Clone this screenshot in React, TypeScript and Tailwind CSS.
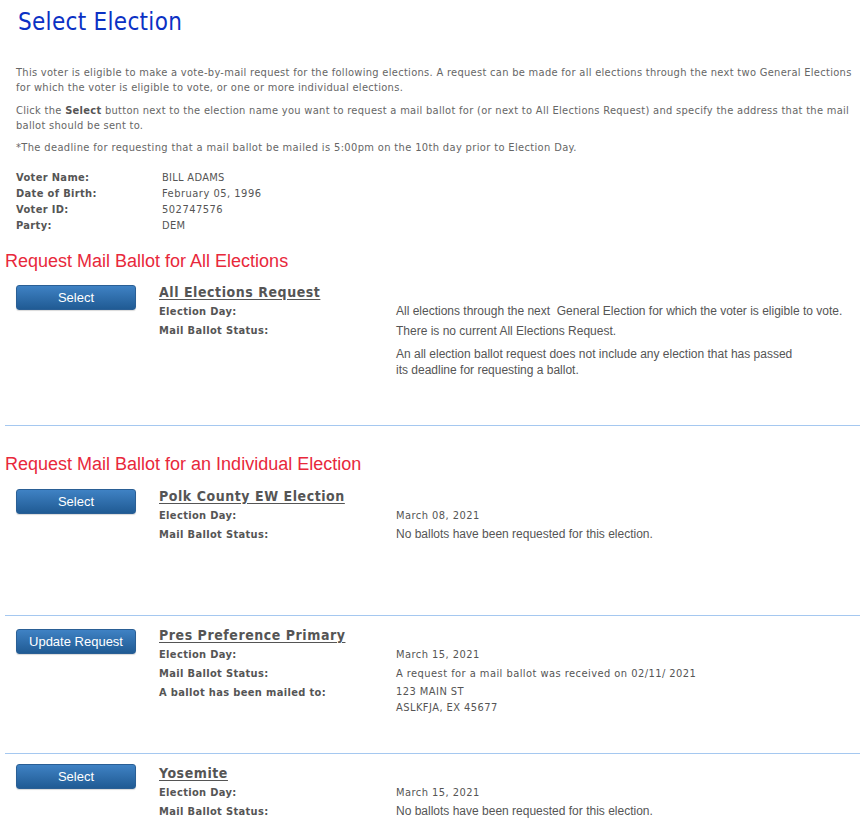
import React from 'react';

const tahoma = "font-['DejaVu_Sans_Condensed','DejaVu_Sans',sans-serif] [font-stretch:condensed]";
const arial = "font-['Liberation_Sans',Arial,sans-serif]";

type Row = { label: string; value: React.ReactNode; arialValue?: boolean };

function BlueButton({ children }: { children: React.ReactNode }) {
  return (
    <button
      className={`${arial} w-[120px] h-[25px] rounded-[3px] border border-[#2a5f95] bg-gradient-to-b from-[#3f82c4] to-[#205b94] text-[13px] text-white shadow-[0_1px_1px_rgba(0,0,0,0.15)]`}
    >
      {children}
    </button>
  );
}

function ElectionBlock({
  button,
  title,
  rows,
  className,
  btnOffset = 'pt-[2px]',
  detailOffset = '',
}: {
  button: string;
  title: string;
  rows: Row[];
  className: string;
  btnOffset?: string;
  detailOffset?: string;
}) {
  return (
    <div className={`flex ${className}`}>
      <div className={`w-[159px] pl-4 shrink-0 ${btnOffset}`}>
        <BlueButton>{button}</BlueButton>
      </div>
      <div className={`flex-1 ${detailOffset}`}>
        <div
          className={`${tahoma} text-[14px] leading-[19px] font-bold tracking-[0.55px] text-[#555] underline underline-offset-2`}
        >
          {title}
        </div>
        {rows.map((r, i) => (
          <div key={i} className="grid grid-cols-[237px_1fr]">
            <div className={`${tahoma} text-[11px] leading-[19px] font-bold tracking-[0.35px] text-[#555]`}>
              {r.label}
            </div>
            <div
              className={
                r.arialValue
                  ? `${arial} text-[12px] leading-[19px] text-[#555]`
                  : `${tahoma} text-[11px] leading-[19px] tracking-[0.45px] text-[#555]`
              }
            >
              {r.value}
            </div>
          </div>
        ))}
      </div>
    </div>
  );
}

export default function App() {
  return (
    <div className="bg-white w-[864px] min-h-[838px] pb-6">
      <h1 className={`${tahoma} text-[24px] leading-[29px] text-[#0b31c4] pl-[18px] pt-[8px] tracking-[0.3px]`}>
        Select Election
      </h1>

      <div className={`${tahoma} text-[11px] leading-[15px] tracking-[0.3px] text-[#666] pl-4 pr-[4px] mt-[28px]`}>
        <p>
          This voter is eligible to make a vote-by-mail request for the following elections. A request can be made for
          all elections through the next two General Elections for which the voter is eligible to vote, or one or more
          individual elections.
        </p>
        <p className="mt-2">
          Click the <b className="text-[#555]">Select</b> button next to the election name you want to request a mail
          ballot for (or next to All Elections Request) and specify the address that the mail ballot should be sent to.
        </p>
        <p className="mt-[7px] tracking-[0.36px]">
          *The deadline for requesting that a mail ballot be mailed is 5:00pm on the 10th day prior to Election Day.
        </p>

        <div className="mt-[15px] grid grid-cols-[146px_1fr] leading-[16px] text-[#555]">
          <span className="font-bold tracking-[0.35px]">Voter Name:</span>
          <span>BILL ADAMS</span>
          <span className="font-bold tracking-[0.35px]">Date of Birth:</span>
          <span className="tracking-[0.5px]">February 05, 1996</span>
          <span className="font-bold tracking-[0.35px]">Voter ID:</span>
          <span className="tracking-[0.5px]">502747576</span>
          <span className="font-bold tracking-[0.35px]">Party:</span>
          <span>DEM</span>
        </div>
      </div>

      <h2 className={`${arial} text-[18px] leading-[22px] text-[#e8283b] pl-[5px] mt-[16px]`}>
        Request Mail Ballot for All Elections
      </h2>
      <ElectionBlock
        className="pt-[11px] h-[153px]"
        button="Select"
        title="All Elections Request"
        btnOffset="pt-[1px]"
        rows={[
          {
            label: 'Election Day:',
            value: 'All elections through the next\u00a0 General Election for which the voter is eligible to vote.',
            arialValue: true,
          },
          {
            label: 'Mail Ballot Status:',
            value: (
              <div className="leading-[16px] pt-[2px]">
                <p>There is no current All Elections Request.</p>
                <p className="mt-[7px]">
                  An all election ballot request does not include any election that has passed
                  <br />
                  its deadline for requesting a ballot.
                </p>
              </div>
            ),
            arialValue: true,
          },
        ]}
      />
      <hr className="ml-[5px] mr-[4px] border-0 border-t border-[#a5c8f0]" />

      <h2 className={`${arial} text-[18px] leading-[22px] text-[#e8283b] pl-[5px] mt-[27px]`}>
        Request Mail Ballot for an Individual Election
      </h2>
      <ElectionBlock
        className="pt-[12px] h-[140px]"
        button="Select"
        title="Polk County EW Election"
        btnOffset="pt-[1px]"
        rows={[
          { label: 'Election Day:', value: 'March 08, 2021' },
          { label: 'Mail Ballot Status:', value: 'No ballots have been requested for this election.', arialValue: true },
        ]}
      />
      <hr className="ml-[5px] mr-[4px] border-0 border-t border-[#a5c8f0]" />
      <ElectionBlock
        className="pt-[10px] h-[137px]"
        button="Update Request"
        title="Pres Preference Primary"
        btnOffset="pt-[2px]"
        rows={[
          { label: 'Election Day:', value: 'March 15, 2021' },
          { label: 'Mail Ballot Status:', value: 'A request for a mail ballot was received on 02/11/ 2021' },
          {
            label: 'A ballot has been mailed to:',
            value: (
              <div className="leading-[16px] pt-[1px]">
                123 MAIN ST
                <br />
                ASLKFJA, EX 45677
              </div>
            ),
          },
        ]}
      />
      <hr className="ml-[5px] mr-[4px] border-0 border-t border-[#a5c8f0]" />
      <ElectionBlock
        className="pt-[9px]"
        button="Select"
        title="Yosemite"
        btnOffset="pt-0"
        detailOffset="pt-[1px]"
        rows={[
          { label: 'Election Day:', value: 'March 15, 2021' },
          { label: 'Mail Ballot Status:', value: 'No ballots have been requested for this election.', arialValue: true },
        ]}
      />
    </div>
  );
}
